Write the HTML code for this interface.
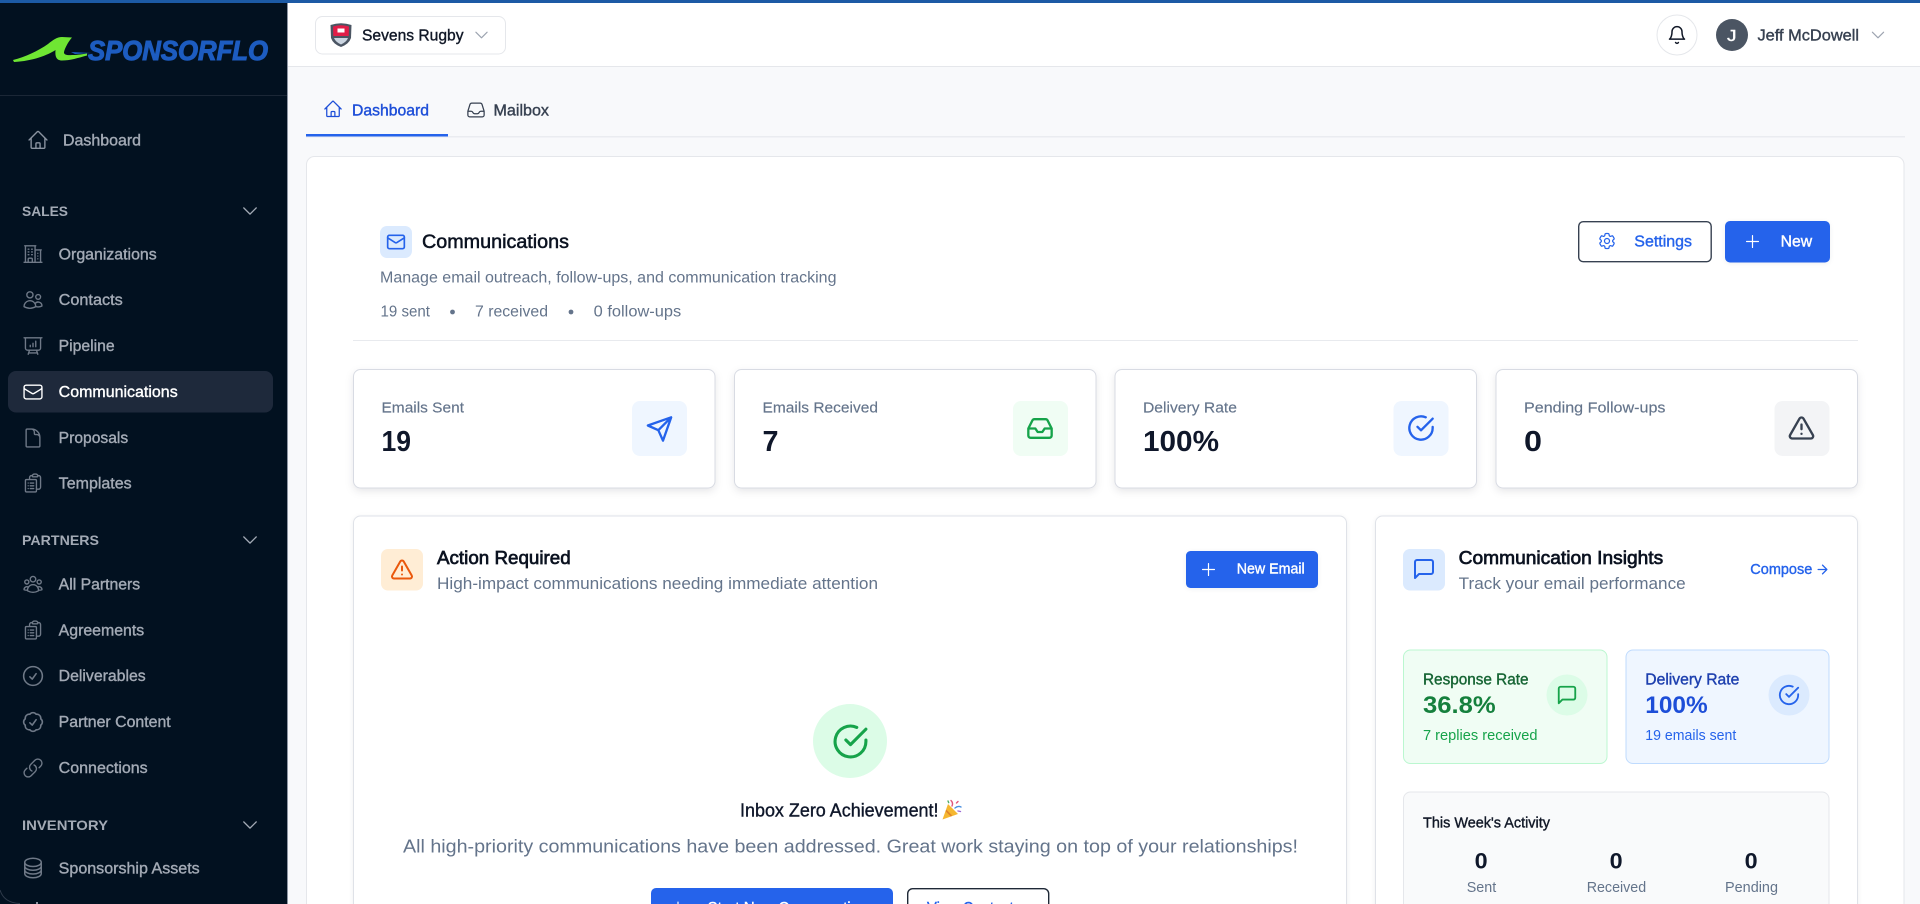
<!DOCTYPE html>
<html lang="en">
<head>
<meta charset="utf-8">
<title>Communications - SponsorFlo</title>
<style>
html,body{margin:0;padding:0;width:1920px;height:904px;overflow:hidden;background:#f8f9fb}
svg{display:block}
text{font-family:"Liberation Sans",sans-serif;fill:currentColor;white-space:pre}
.m{stroke:currentColor;stroke-width:.38px}
.s{stroke:currentColor;stroke-width:.7px}
.h{fill:none;stroke-width:1.5;stroke-linecap:round;stroke-linejoin:round}
.l{fill:none;stroke-width:2;stroke-linecap:round;stroke-linejoin:round}
.nav{font-size:15.5px;color:#a3aab5}
.sec{font-size:14px;font-weight:bold;color:#a3aab5}
.sub{font-size:15.5px;color:#64748b}
.sl{font-size:15px;color:#64748b;stroke:currentColor;stroke-width:.15px}
.num{font-size:29px;font-weight:bold;color:#0f172a}
.ttl{font-size:18.5px;color:#0b1220}
.shadow{filter:drop-shadow(0 3px 4px rgba(15,23,42,.1))}
.soft{filter:drop-shadow(0 1px 2px rgba(15,23,42,.07))}
</style>
</head>
<body>
<svg width="1920" height="904" viewBox="0 0 1920 904" xmlns="http://www.w3.org/2000/svg">
<defs>
<symbol id="home" viewBox="0 0 24 24"><path class="h" d="M2.25 12l8.954-8.955c.44-.439 1.152-.439 1.591 0L21.75 12M4.5 9.75v10.125c0 .621.504 1.125 1.125 1.125H9.75v-4.875c0-.621.504-1.125 1.125-1.125h2.25c.621 0 1.125.504 1.125 1.125V21h4.125c.621 0 1.125-.504 1.125-1.125V9.75M8.25 21h8.25"/></symbol>
<symbol id="bld" viewBox="0 0 24 24"><path class="h" d="M2.25 21h19.5m-18-18v18m10.5-18v18m6-13.5V21M6.75 6.75h.75m-.75 3h.75m-.75 3h.75m3-6h.75m-.75 3h.75m-.75 3h.75M6.75 21v-3.375c0-.621.504-1.125 1.125-1.125h2.25c.621 0 1.125.504 1.125 1.125V21M3 3h12m-.75 4.5H21m-3.75 3.75h.008v.008h-.008v-.008zm0 3h.008v.008h-.008v-.008zm0 3h.008v.008h-.008v-.008z"/></symbol>
<symbol id="users" viewBox="0 0 24 24"><path class="h" d="M15 19.128a9.38 9.38 0 002.625.372 9.337 9.337 0 004.121-.952 4.125 4.125 0 00-7.533-2.493M15 19.128v-.003c0-1.113-.285-2.16-.786-3.07M15 19.128v.106A12.318 12.318 0 018.624 21c-2.331 0-4.512-.645-6.374-1.766l-.001-.109a6.375 6.375 0 0111.964-3.07M12 6.375a3.375 3.375 0 11-6.75 0 3.375 3.375 0 016.75 0zm8.25 2.25a2.625 2.625 0 11-5.25 0 2.625 2.625 0 015.25 0z"/></symbol>
<symbol id="pres" viewBox="0 0 24 24"><path class="h" d="M3.75 3v11.25A2.25 2.25 0 006 16.5h2.25M3.75 3h-1.5m1.5 0h16.5m0 0h1.5m-1.5 0v11.25A2.25 2.25 0 0118 16.5h-2.25m-7.5 0h7.5m-7.5 0l-1 3m8.5-3l1 3m0 0l.5 1.5m-.5-1.5h-9.5m0 0l-.5 1.5M9 11.25v1.5M12 9v3.75m3-6v6"/></symbol>
<symbol id="env" viewBox="0 0 24 24"><path class="h" d="M21.75 6.75v10.5a2.25 2.25 0 01-2.25 2.25h-15a2.25 2.25 0 01-2.25-2.25V6.75m19.5 0A2.25 2.25 0 0019.5 4.5h-15a2.25 2.25 0 00-2.25 2.25m19.5 0v.243a2.25 2.25 0 01-1.07 1.916l-7.5 4.615a2.25 2.25 0 01-2.36 0L3.32 8.91a2.25 2.25 0 01-1.07-1.916V6.75"/></symbol>
<symbol id="doc" viewBox="0 0 24 24"><path class="h" d="M19.5 14.25v-2.625a3.375 3.375 0 00-3.375-3.375h-1.5A1.125 1.125 0 0113.5 7.125v-1.5a3.375 3.375 0 00-3.375-3.375H8.25m2.25 0H5.625c-.621 0-1.125.504-1.125 1.125v17.25c0 .621.504 1.125 1.125 1.125h12.75c.621 0 1.125-.504 1.125-1.125V11.25a9 9 0 00-9-9z"/></symbol>
<symbol id="clip" viewBox="0 0 24 24"><path class="h" d="M9 12h3.75M9 15h3.75M9 18h3.75m3 .75H18a2.25 2.25 0 002.25-2.25V6.108c0-1.135-.845-2.098-1.976-2.192a48.424 48.424 0 00-1.123-.08m-5.801 0c-.065.21-.1.433-.1.664 0 .414.336.75.75.75h4.5a.75.75 0 00.75-.75 2.25 2.25 0 00-.1-.664m-5.8 0A2.251 2.251 0 0113.5 2.25H15c1.012 0 1.867.668 2.15 1.586m-5.8 0c-.376.023-.75.05-1.124.08C9.095 4.01 8.25 4.973 8.25 6.108V8.25m0 0H4.875c-.621 0-1.125.504-1.125 1.125v11.25c0 .621.504 1.125 1.125 1.125h9.75c.621 0 1.125-.504 1.125-1.125V9.375c0-.621-.504-1.125-1.125-1.125H8.25zM6.75 12h.008v.008H6.75V12zm0 3h.008v.008H6.75V15zm0 3h.008v.008H6.75V18z"/></symbol>
<symbol id="group" viewBox="0 0 24 24"><path class="h" d="M18 18.72a9.094 9.094 0 003.741-.479 3 3 0 00-4.682-2.72m.94 3.198l.001.031c0 .225-.012.447-.037.666A11.944 11.944 0 0112 21c-2.17 0-4.207-.576-5.963-1.584A6.062 6.062 0 016 18.719m12 0a5.971 5.971 0 00-.941-3.197m0 0A5.995 5.995 0 0012 12.75a5.995 5.995 0 00-5.058 2.772m0 0a3 3 0 00-4.681 2.72 8.986 8.986 0 003.74.477m.94-3.197a5.971 5.971 0 00-.94 3.197M15 6.75a3 3 0 11-6 0 3 3 0 016 0zm6 3a2.25 2.25 0 11-4.5 0 2.25 2.25 0 014.5 0zm-13.5 0a2.25 2.25 0 11-4.5 0 2.25 2.25 0 014.5 0z"/></symbol>
<symbol id="ccirc" viewBox="0 0 24 24"><path class="h" d="M9 12.75L11.25 15 15 9.75M21 12a9 9 0 11-18 0 9 9 0 0118 0z"/></symbol>
<symbol id="badge" viewBox="0 0 24 24"><path class="h" d="M9 12.75L11.25 15 15 9.75M21 12c0 1.268-.63 2.39-1.593 3.068a3.745 3.745 0 01-1.043 3.296 3.745 3.745 0 01-3.296 1.043A3.745 3.745 0 0112 21c-1.268 0-2.39-.63-3.068-1.593a3.746 3.746 0 01-3.296-1.043 3.745 3.745 0 01-1.043-3.296A3.745 3.745 0 013 12c0-1.268.63-2.39 1.593-3.068a3.745 3.745 0 011.043-3.296 3.746 3.746 0 013.296-1.043A3.746 3.746 0 0112 3c1.268 0 2.39.63 3.068 1.593a3.746 3.746 0 013.296 1.043 3.746 3.746 0 011.043 3.296A3.745 3.745 0 0121 12z"/></symbol>
<symbol id="link" viewBox="0 0 24 24"><path class="h" d="M13.19 8.688a4.5 4.5 0 011.242 7.244l-4.5 4.5a4.5 4.5 0 01-6.364-6.364l1.757-1.757m13.35-.622l1.757-1.757a4.5 4.5 0 00-6.364-6.364l-4.5 4.5a4.5 4.5 0 001.242 7.244"/></symbol>
<symbol id="stack" viewBox="0 0 24 24"><path class="h" d="M20.25 6.375c0 2.278-3.694 4.125-8.25 4.125S3.75 8.653 3.75 6.375m16.5 0c0-2.278-3.694-4.125-8.25-4.125S3.75 4.097 3.75 6.375m16.5 0v11.25c0 2.278-3.694 4.125-8.25 4.125s-8.25-1.847-8.25-4.125V6.375m16.5 0v3.75m-16.5-3.75v3.75m16.5 0v3.75C20.25 16.153 16.556 18 12 18s-8.25-1.847-8.25-4.125v-3.75m16.5 0c0 2.278-3.694 4.125-8.25 4.125s-8.25-1.847-8.25-4.125"/></symbol>
<symbol id="chev" viewBox="0 0 24 24"><path class="h" d="M19.5 8.25l-7.5 7.5-7.5-7.5"/></symbol>
<symbol id="hinbox" viewBox="0 0 24 24"><path class="h" d="M2.25 13.5h3.86a2.25 2.25 0 012.012 1.244l.256.512a2.25 2.25 0 002.013 1.244h3.218a2.25 2.25 0 002.013-1.244l.256-.512a2.25 2.25 0 012.013-1.244h3.859m-19.5.338V18a2.25 2.25 0 002.25 2.25h15A2.25 2.25 0 0021.75 18v-4.162c0-.224-.034-.447-.1-.661L19.24 5.338a2.25 2.25 0 00-2.15-1.588H6.911a2.25 2.25 0 00-2.15 1.588L2.35 13.177a2.25 2.25 0 00-.1.661z"/></symbol>
<symbol id="gear" viewBox="0 0 24 24"><path class="h" d="M9.594 3.94c.09-.542.56-.94 1.11-.94h2.593c.55 0 1.02.398 1.11.94l.213 1.281c.063.374.313.686.645.87.074.04.147.083.22.127.324.196.72.257 1.075.124l1.217-.456a1.125 1.125 0 011.37.49l1.296 2.247a1.125 1.125 0 01-.26 1.431l-1.003.827c-.293.24-.438.613-.431.992a6.759 6.759 0 010 .255c-.007.378.138.75.43.99l1.005.828c.424.35.534.954.26 1.43l-1.298 2.247a1.125 1.125 0 01-1.369.491l-1.217-.456c-.355-.133-.75-.072-1.076.124a6.57 6.57 0 01-.22.128c-.331.183-.581.495-.644.869l-.213 1.28c-.09.543-.56.941-1.11.941h-2.594c-.55 0-1.02-.398-1.11-.94l-.213-1.281c-.062-.374-.312-.686-.644-.87a6.52 6.52 0 01-.22-.127c-.325-.196-.72-.257-1.076-.124l-1.217.456a1.125 1.125 0 01-1.369-.49l-1.297-2.247a1.125 1.125 0 01.26-1.431l1.004-.827c.292-.24.437-.613.43-.992a6.932 6.932 0 010-.255c.007-.378-.138-.75-.43-.99l-1.004-.828a1.125 1.125 0 01-.26-1.43l1.297-2.247a1.125 1.125 0 011.37-.491l1.216.456c.356.133.751.072 1.076-.124.072-.044.146-.087.22-.128.332-.183.582-.495.644-.869l.214-1.281zM15 12a3 3 0 11-6 0 3 3 0 016 0z"/></symbol>
<symbol id="plus" viewBox="0 0 24 24"><path class="h" d="M12 4.5v15m7.5-7.5h-15"/></symbol>
<symbol id="lsend" viewBox="0 0 24 24"><path class="l" d="M22 2L11 13M22 2l-7 20-4-9-9-4 20-7z"/></symbol>
<symbol id="linbox" viewBox="0 0 24 24"><path class="l" d="M22 12h-6l-2 3h-4l-2-3H2M5.45 5.11L2 12v6a2 2 0 0 0 2 2h16a2 2 0 0 0 2-2v-6l-3.45-6.89A2 2 0 0 0 16.76 4H7.24a2 2 0 0 0-1.79 1.11z"/></symbol>
<symbol id="lcheck" viewBox="0 0 24 24"><path class="l" d="M22 11.08V12a10 10 0 1 1-5.93-9.14M22 4L12 14.01l-3-3"/></symbol>
<symbol id="lwarn" viewBox="0 0 24 24"><path class="l" d="M21.73 18l-8-14a2 2 0 0 0-3.48 0l-8 14A2 2 0 0 0 4 21h16a2 2 0 0 0 1.73-3zM12 9v4M12 17h.01"/></symbol>
<symbol id="lmsg" viewBox="0 0 24 24"><path class="l" d="M21 15a2 2 0 0 1-2 2H7l-4 4V5a2 2 0 0 1 2-2h14a2 2 0 0 1 2 2z"/></symbol>
<symbol id="lmail" viewBox="0 0 24 24"><rect class="l" x="2" y="4" width="20" height="16" rx="2"/><path class="l" d="M22 7l-8.97 5.7a1.94 1.94 0 0 1-2.06 0L2 7"/></symbol>
<symbol id="lbell" viewBox="0 0 24 24"><path class="h" style="stroke-width:1.8" d="M6 8a6 6 0 0 1 12 0c0 7 3 9 3 9H3s3-2 3-9M10.3 21a1.94 1.94 0 0 0 3.4 0"/></symbol>
<symbol id="larrow" viewBox="0 0 24 24"><path class="l" d="M5 12h14M12 5l7 7-7 7"/></symbol>
</defs>

<!-- page background -->
<rect width="1920" height="904" fill="#f8f9fb"/>

<!-- header -->
<rect x="288" y="3" width="1632" height="63" fill="#fff"/>
<rect x="288" y="66" width="1632" height="1" fill="#e5e7eb"/>

<!-- sidebar -->
<rect x="0" y="3" width="287" height="901" fill="#021120"/>
<rect x="287" y="3" width="1" height="901" fill="#8d95a3"/>
<rect x="0" y="95" width="287" height="1" fill="#1b2736"/>

<!-- top bar -->
<rect width="1920" height="3" fill="#1c5aa5"/>

<!-- logo -->
<path d="M13 60C25 57 38 51 48 44C53 40 57 37 62 37L72 37.5C68 42 65 48 64 52C63.5 55 68 55.5 72 55C78 55 83 54 87 53.5L87 55.5C78 58 70 60.5 62 60.5C56 60.5 55 56 55.5 50C48 55 33 61 14 62Z" fill="#6fe633"/>
<path d="M71 52L92 53L75 54Z" fill="#1d5cc0"/>
<text x="88" y="60" font-size="27.5" font-weight="bold" font-style="italic" textLength="180" lengthAdjust="spacingAndGlyphs" stroke="#1d5cc0" stroke-width="1.1" style="color:#1d5cc0">SPONSORFLO</text>

<!-- sidebar nav -->
<use href="#home" x="27" y="129" width="22" height="22" stroke="#8a93a0"/>
<text class="nav m" x="63" y="145.5" textLength="78" lengthAdjust="spacingAndGlyphs">Dashboard</text>

<text class="sec" x="22" y="216" textLength="46" lengthAdjust="spacingAndGlyphs">SALES</text>
<use href="#chev" x="240" y="201" width="20" height="20" stroke="#a3aab5"/>
<use href="#bld" x="22" y="243" width="22" height="22" stroke="#6f7987"/>
<text class="nav m" x="58.7" y="259.5" textLength="98" lengthAdjust="spacingAndGlyphs">Organizations</text>
<use href="#users" x="22" y="289" width="22" height="22" stroke="#6f7987"/>
<text class="nav m" x="58.7" y="305" textLength="64" lengthAdjust="spacingAndGlyphs">Contacts</text>
<use href="#pres" x="22" y="335" width="22" height="22" stroke="#6f7987"/>
<text class="nav m" x="58.7" y="351" textLength="56" lengthAdjust="spacingAndGlyphs">Pipeline</text>
<rect x="8" y="371" width="265" height="41.5" rx="8" fill="#1e293b"/>
<use href="#env" x="22" y="381" width="22" height="22" stroke="#fff"/>
<text class="nav m" x="58.7" y="397" textLength="119" lengthAdjust="spacingAndGlyphs" style="color:#fff">Communications</text>
<use href="#doc" x="22" y="427" width="22" height="22" stroke="#6f7987"/>
<text class="nav m" x="58.7" y="443" textLength="69.5" lengthAdjust="spacingAndGlyphs">Proposals</text>
<use href="#clip" x="22" y="472" width="22" height="22" stroke="#6f7987"/>
<text class="nav m" x="58.7" y="488.5" textLength="73" lengthAdjust="spacingAndGlyphs">Templates</text>

<text class="sec" x="22" y="545" textLength="77" lengthAdjust="spacingAndGlyphs">PARTNERS</text>
<use href="#chev" x="240" y="530" width="20" height="20" stroke="#a3aab5"/>
<use href="#group" x="22" y="573" width="22" height="22" stroke="#6f7987"/>
<text class="nav m" x="58.7" y="589.5" textLength="81.5" lengthAdjust="spacingAndGlyphs">All Partners</text>
<use href="#clip" x="22" y="619" width="22" height="22" stroke="#6f7987"/>
<text class="nav m" x="58.7" y="635.5" textLength="85.5" lengthAdjust="spacingAndGlyphs">Agreements</text>
<use href="#ccirc" x="20.5" y="663.5" width="25" height="25" stroke="#6f7987"/>
<text class="nav m" x="58.7" y="681" textLength="87" lengthAdjust="spacingAndGlyphs">Deliverables</text>
<use href="#badge" x="20.5" y="709.5" width="25" height="25" stroke="#6f7987"/>
<text class="nav m" x="58.7" y="727" textLength="112" lengthAdjust="spacingAndGlyphs">Partner Content</text>
<use href="#link" x="22" y="757" width="22" height="22" stroke="#6f7987"/>
<text class="nav m" x="58.7" y="773" textLength="89" lengthAdjust="spacingAndGlyphs">Connections</text>

<text class="sec" x="22" y="830" textLength="86" lengthAdjust="spacingAndGlyphs">INVENTORY</text>
<use href="#chev" x="240" y="815" width="20" height="20" stroke="#a3aab5"/>
<use href="#stack" x="21" y="856" width="24" height="24" stroke="#6f7987"/>
<text class="nav m" x="58.7" y="873.5" textLength="141" lengthAdjust="spacingAndGlyphs">Sponsorship Assets</text>
<path d="M0 890Q4 903 20 903.5" fill="none" stroke="#2e3a4a" stroke-width="1"/>
<rect x="36" y="902" width="2" height="2" fill="#8a93a0"/>

<!-- org selector -->
<rect x="315.5" y="16.5" width="190" height="37.5" rx="7" fill="#fff" stroke="#e5e7eb"/>
<path d="M330.5 25Q341 21.5 351.5 25L351 38Q349 44 341 47Q333 44 331 38Z" fill="#4b5563"/>
<path d="M333 26.5Q341 24 349 26.5L348.7 36H333.3Z" fill="#e11d48"/>
<rect x="337.5" y="28.5" width="7" height="4" fill="#fff"/>
<path d="M334 38H348Q346.5 42 341 44.5Q335.5 42 334 38Z" fill="#cbd5e1"/>
<text class="m" x="362" y="40.5" font-size="15.5" textLength="101.5" lengthAdjust="spacingAndGlyphs" style="color:#111827">Sevens Rugby</text>
<use href="#chev" x="472.5" y="26" width="18" height="18" stroke="#9ca3af"/>

<!-- header right -->
<circle cx="1677" cy="35" r="20" fill="#fff" stroke="#e5e7eb"/>
<use href="#lbell" x="1667" y="25" width="20" height="20" stroke="#111827"/>
<circle cx="1732" cy="35" r="16" fill="#4b5563"/>
<text class="m" x="1727" y="41" font-size="16" textLength="9.5" lengthAdjust="spacingAndGlyphs" style="color:#fff">J</text>
<text class="m" x="1757.5" y="40.5" font-size="15.5" textLength="101.5" lengthAdjust="spacingAndGlyphs" style="color:#374151">Jeff McDowell</text>
<use href="#chev" x="1869" y="26" width="18" height="18" stroke="#9ca3af"/>

<!-- tabs -->
<rect x="306" y="136" width="1599" height="1.5" fill="#eaecf0"/>
<rect x="306" y="134" width="142" height="2.5" fill="#2563eb"/>
<use href="#home" x="323" y="99" width="20" height="20" stroke="#1d4ed8"/>
<text class="m" x="352" y="115.5" font-size="15.5" textLength="77" lengthAdjust="spacingAndGlyphs" style="color:#1d4ed8">Dashboard</text>
<use href="#hinbox" x="466" y="100" width="20" height="20" stroke="#374151"/>
<text class="m" x="493.5" y="115.5" font-size="15.5" textLength="55.5" lengthAdjust="spacingAndGlyphs" style="color:#374151">Mailbox</text>

<!-- main card -->
<rect x="306.5" y="156.5" width="1597.5" height="760" rx="8" fill="#fff" stroke="#e5e7eb"/>

<!-- page heading -->
<rect x="380" y="226" width="32" height="32" rx="7" fill="#dbeafe"/>
<use href="#lmail" x="386" y="232" width="20" height="20" stroke="#2563eb"/>
<text class="s" x="422" y="248" textLength="147" lengthAdjust="spacingAndGlyphs" style="font-size:19px;color:#0b1220;stroke-width:.5px">Communications</text>
<text class="sub" x="380" y="282.5" textLength="456.5" lengthAdjust="spacingAndGlyphs">Manage email outreach, follow-ups, and communication tracking</text>
<text class="sub" x="380.5" y="316.5" textLength="49.5" lengthAdjust="spacingAndGlyphs">19 sent</text>
<circle cx="452.5" cy="312" r="2.4" fill="#64748b"/>
<text class="sub" x="475" y="316.5" textLength="73" lengthAdjust="spacingAndGlyphs">7 received</text>
<circle cx="571" cy="312" r="2.4" fill="#64748b"/>
<text class="sub" x="593.7" y="316.5" textLength="87.5" lengthAdjust="spacingAndGlyphs">0 follow-ups</text>

<!-- heading buttons -->
<rect x="1578.7" y="221.7" width="132.5" height="40" rx="4.5" fill="#fff" stroke="#374151" stroke-width="1.4"/>
<use href="#gear" x="1597" y="231" width="20" height="20" stroke="#2563eb"/>
<text class="m" x="1634.3" y="246.5" font-size="15.5" textLength="57.7" lengthAdjust="spacingAndGlyphs" style="color:#2563eb">Settings</text>
<rect class="soft" x="1725" y="221" width="105" height="41.5" rx="5" fill="#2563eb"/>
<use href="#plus" x="1743" y="232" width="19" height="19" stroke="#fff"/>
<text class="m" x="1780.7" y="246.5" font-size="15.5" textLength="31.5" lengthAdjust="spacingAndGlyphs" style="color:#fff">New</text>

<rect x="353" y="340" width="1505" height="1" fill="#e8eaee"/>

<!-- stat cards -->
<g fill="#fff" stroke="#d8dbe3">
<rect class="shadow" x="353.5" y="369.5" width="361.5" height="118.5" rx="7"/>
<rect class="shadow" x="734.5" y="369.5" width="361.5" height="118.5" rx="7"/>
<rect class="shadow" x="1115" y="369.5" width="361.5" height="118.5" rx="7"/>
<rect class="shadow" x="1496" y="369.5" width="361.5" height="118.5" rx="7"/>
</g>
<text class="sl" x="381.5" y="412.5" textLength="82.5" lengthAdjust="spacingAndGlyphs">Emails Sent</text>
<text class="num" x="381.5" y="451" textLength="29.5" lengthAdjust="spacingAndGlyphs">19</text>
<rect x="632" y="401" width="55" height="55" rx="8" fill="#eff6ff"/>
<use href="#lsend" x="645.5" y="415" width="28" height="28" stroke="#2563eb"/>

<text class="sl" x="762.5" y="412.5" textLength="115.5" lengthAdjust="spacingAndGlyphs">Emails Received</text>
<text class="num" x="762.5" y="451" textLength="16" lengthAdjust="spacingAndGlyphs">7</text>
<rect x="1013" y="401" width="55" height="55" rx="8" fill="#f0fdf4"/>
<use href="#linbox" x="1026" y="414.5" width="28" height="28" stroke="#16a34a"/>

<text class="sl" x="1143" y="412.5" textLength="94" lengthAdjust="spacingAndGlyphs">Delivery Rate</text>
<text class="num" x="1143" y="451" textLength="76" lengthAdjust="spacingAndGlyphs">100%</text>
<rect x="1393.5" y="401" width="55" height="55" rx="8" fill="#eff6ff"/>
<use href="#lcheck" x="1407" y="414" width="28" height="28" stroke="#2563eb"/>

<text class="sl" x="1524" y="412.5" textLength="141.5" lengthAdjust="spacingAndGlyphs">Pending Follow-ups</text>
<text class="num" x="1524" y="451" textLength="18" lengthAdjust="spacingAndGlyphs">0</text>
<rect x="1774.5" y="401" width="55" height="55" rx="8" fill="#f3f4f6"/>
<use href="#lwarn" x="1787.5" y="414" width="28" height="28" stroke="#374151"/>

<!-- action required card -->
<rect class="soft" x="353.5" y="516" width="993" height="420" rx="7" fill="#fff" stroke="#dfe2e8"/>
<rect x="381" y="549" width="42" height="41.5" rx="7" fill="#ffedd5"/>
<use href="#lwarn" x="390" y="557.5" width="24" height="24" stroke="#ea580c"/>
<text class="ttl s" x="437" y="564" textLength="133.7" lengthAdjust="spacingAndGlyphs">Action Required</text>
<text x="437" y="589" font-size="16.5" textLength="441" lengthAdjust="spacingAndGlyphs" style="color:#64748b">High-impact communications needing immediate attention</text>
<rect class="soft" x="1186" y="551" width="132" height="37" rx="4.5" fill="#2563eb"/>
<use href="#plus" x="1199" y="560" width="19" height="19" stroke="#fff"/>
<text class="m" x="1236.7" y="573.7" font-size="15" textLength="68" lengthAdjust="spacingAndGlyphs" style="color:#fff">New Email</text>

<circle cx="850" cy="741" r="37" fill="#dcfce7"/>
<use href="#lcheck" x="832" y="723" width="37" height="37" stroke="#16a34a"/>
<text class="m" x="740" y="816.5" font-size="18.5" textLength="198.5" lengthAdjust="spacingAndGlyphs" style="color:#0f172a">Inbox Zero Achievement!</text>
<!-- party popper -->
<path d="M942.5 819.5L948 804L958 814Z" fill="#f5b731"/>
<path d="M946 810.5L951.5 816" stroke="#e0832a" stroke-width="1.6"/>
<g fill="none" stroke-width="1.4" stroke-linecap="round">
<path d="M952 806Q953.5 803 951 800.5" stroke="#e0557a"/>
<path d="M955 808Q958 805.5 961 807" stroke="#4a8fe0"/>
<path d="M956.5 803l1.5-1.5" stroke="#e0557a"/>
<path d="M958 811l2.5.5" stroke="#9c6ad6"/>
<path d="M948 801l.7 1.6" stroke="#4fae6a"/>
</g>
<text x="403" y="852.5" font-size="18.5" textLength="895" lengthAdjust="spacingAndGlyphs" style="color:#64748b">All high-priority communications have been addressed. Great work staying on top of your relationships!</text>
<rect x="651" y="888" width="242" height="42" rx="5" fill="#2563eb"/>
<use href="#plus" x="668.5" y="898.5" width="19" height="19" stroke="#fff"/>
<text class="m" x="707.5" y="913" font-size="15.5" textLength="160" lengthAdjust="spacingAndGlyphs" style="color:#fff">Start New Conversation</text>
<rect x="907.7" y="888.7" width="141" height="42" rx="5" fill="#fff" stroke="#1f2937" stroke-width="1.4"/>
<text class="m" x="927" y="913" font-size="15.5" textLength="94" lengthAdjust="spacingAndGlyphs" style="color:#2563eb">View Contacts</text>

<!-- insights card -->
<rect class="soft" x="1375.5" y="516" width="482" height="420" rx="7" fill="#fff" stroke="#dfe2e8"/>
<rect x="1403" y="549" width="42" height="41.5" rx="7" fill="#dbeafe"/>
<use href="#lmsg" x="1412" y="557" width="24" height="24" stroke="#2563eb"/>
<text class="ttl s" x="1458.7" y="564" textLength="204.5" lengthAdjust="spacingAndGlyphs">Communication Insights</text>
<text x="1458.7" y="589" font-size="16.5" textLength="227" lengthAdjust="spacingAndGlyphs" style="color:#64748b">Track your email performance</text>
<text class="m" x="1750.3" y="574" font-size="14.5" textLength="62" lengthAdjust="spacingAndGlyphs" style="color:#2563eb">Compose</text>
<use href="#larrow" x="1815" y="562" width="15" height="15" stroke="#2563eb"/>

<rect x="1403.5" y="650" width="203.5" height="113.5" rx="7" fill="#f0fdf4" stroke="#bbf7d0"/>
<text class="m" x="1423" y="684.5" font-size="15.5" textLength="105.5" lengthAdjust="spacingAndGlyphs" style="color:#166534">Response Rate</text>
<text x="1423" y="713" font-size="24" font-weight="bold" textLength="72.7" lengthAdjust="spacingAndGlyphs" style="color:#15803d">36.8%</text>
<text x="1423" y="740" font-size="14.5" textLength="114.5" lengthAdjust="spacingAndGlyphs" style="color:#16a34a">7 replies received</text>
<circle cx="1567" cy="695" r="20.5" fill="#dcfce7"/>
<use href="#lmsg" x="1556" y="684" width="22" height="22" stroke="#16a34a"/>

<rect x="1626" y="650" width="203" height="113.5" rx="7" fill="#eff6ff" stroke="#bfdbfe"/>
<text class="m" x="1645.3" y="684.5" font-size="15.5" textLength="94" lengthAdjust="spacingAndGlyphs" style="color:#1e40af">Delivery Rate</text>
<text x="1645.3" y="713" font-size="24" font-weight="bold" textLength="62.4" lengthAdjust="spacingAndGlyphs" style="color:#1d4ed8">100%</text>
<text x="1645.3" y="740" font-size="14.5" textLength="91" lengthAdjust="spacingAndGlyphs" style="color:#2563eb">19 emails sent</text>
<circle cx="1789" cy="695" r="20.5" fill="#dbeafe"/>
<use href="#lcheck" x="1778" y="684" width="22" height="22" stroke="#2563eb"/>

<rect x="1403.5" y="792" width="425.5" height="150" rx="7" fill="#f9fafb" stroke="#e5e7eb"/>
<text class="m" x="1423" y="827.3" font-size="15" textLength="127" lengthAdjust="spacingAndGlyphs" style="color:#111827">This Week's Activity</text>
<g font-size="22" font-weight="bold" style="color:#0f172a">
<text x="1474.7" y="868.7" textLength="13" lengthAdjust="spacingAndGlyphs">0</text>
<text x="1609.7" y="868.7" textLength="13" lengthAdjust="spacingAndGlyphs">0</text>
<text x="1744.7" y="868.7" textLength="13" lengthAdjust="spacingAndGlyphs">0</text>
</g>
<g font-size="15" style="color:#64748b">
<text x="1466.7" y="892" textLength="29.5" lengthAdjust="spacingAndGlyphs">Sent</text>
<text x="1586.7" y="892" textLength="59.5" lengthAdjust="spacingAndGlyphs">Received</text>
<text x="1725" y="892" textLength="53" lengthAdjust="spacingAndGlyphs">Pending</text>
</g>
</svg>
</body>
</html>
